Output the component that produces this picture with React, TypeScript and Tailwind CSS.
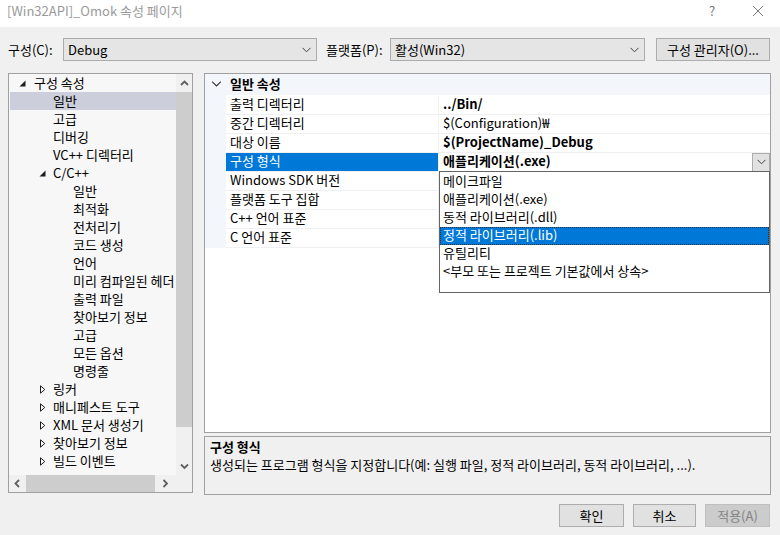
import React from "react";

const FONT = "font-['Noto_Sans_CJK_KR','Noto_Sans',sans-serif]";

type TreeItem = { label: string; level: number; state?: "open" | "closed"; selected?: boolean };

const treeItems: TreeItem[] = [
  { label: "구성 속성", level: 0, state: "open" },
  { label: "일반", level: 1, selected: true },
  { label: "고급", level: 1 },
  { label: "디버깅", level: 1 },
  { label: "VC++ 디렉터리", level: 1 },
  { label: "C/C++", level: 1, state: "open" },
  { label: "일반", level: 2 },
  { label: "최적화", level: 2 },
  { label: "전처리기", level: 2 },
  { label: "코드 생성", level: 2 },
  { label: "언어", level: 2 },
  { label: "미리 컴파일된 헤더", level: 2 },
  { label: "출력 파일", level: 2 },
  { label: "찾아보기 정보", level: 2 },
  { label: "고급", level: 2 },
  { label: "모든 옵션", level: 2 },
  { label: "명령줄", level: 2 },
  { label: "링커", level: 1, state: "closed" },
  { label: "매니페스트 도구", level: 1, state: "closed" },
  { label: "XML 문서 생성기", level: 1, state: "closed" },
  { label: "찾아보기 정보", level: 1, state: "closed" },
  { label: "빌드 이벤트", level: 1, state: "closed" },
];

const props = [
  { name: "출력 디렉터리", value: "../Bin/", bold: true },
  { name: "중간 디렉터리", value: "$(Configuration)₩", bold: false },
  { name: "대상 이름", value: "$(ProjectName)_Debug", bold: true },
  { name: "구성 형식", value: "애플리케이션(.exe)", bold: true, selected: true },
  { name: "Windows SDK 버전", value: "", bold: false },
  { name: "플랫폼 도구 집합", value: "", bold: false },
  { name: "C++ 언어 표준", value: "", bold: false },
  { name: "C 언어 표준", value: "", bold: false },
];

const options = [
  "메이크파일",
  "애플리케이션(.exe)",
  "동적 라이브러리(.dll)",
  "정적 라이브러리(.lib)",
  "유틸리티",
  "<부모 또는 프로젝트 기본값에서 상속>",
];

const ChevronDown = ({ className = "" }: { className?: string }) => (
  <svg width="9" height="6" viewBox="0 0 9 6" className={className}>
    <path d="M0.5 0.8 L4.5 4.8 L8.5 0.8" fill="none" stroke="currentColor" strokeWidth="1" />
  </svg>
);

const Arrow = ({ dir }: { dir: "up" | "down" | "left" | "right" }) => {
  const d = {
    up: "M1 6 L4.5 2.5 L8 6",
    down: "M1 2.5 L4.5 6 L8 2.5",
    left: "M6 1 L2.5 4.5 L6 8",
    right: "M2.5 1 L6 4.5 L2.5 8",
  }[dir];
  return (
    <svg width="9" height="9" viewBox="0 0 9 9">
      <path d={d} fill="none" stroke="#606060" strokeWidth="1.8" />
    </svg>
  );
};

const Toggle = ({ state }: { state: "open" | "closed" }) =>
  state === "open" ? (
    <svg width="7" height="7" viewBox="0 0 7 7">
      <path d="M6.5 0.5 L6.5 6.5 L0.5 6.5 Z" fill="#1e1e1e" />
    </svg>
  ) : (
    <svg width="7" height="9" viewBox="0 0 7 9">
      <path d="M1.5 0.8 L5.8 4.5 L1.5 8.2 Z" fill="none" stroke="#1e1e1e" strokeWidth="1" />
    </svg>
  );

const Select = ({ value, width }: { value: string; width: string }) => (
  <div className={`${width} h-[23px] border border-[#acacac] bg-[#e5e5e5] flex items-center justify-between pl-[4px] pr-[5px]`}>
    <span>{value}</span>
    <ChevronDown className="text-[#404040]" />
  </div>
);

export default function App() {
  return (
    <div className={`w-[780px] h-[535px] bg-[#f0f0f0] text-[13px] text-black leading-none ${FONT} overflow-hidden`}>
      {/* title bar */}
      <div className="h-[27px] bg-white flex items-center pl-[7px] pb-[6px] text-[#9a9a9a]">
        <span className="flex-1">[Win32API]_Omok 속성 페이지</span>
        <span className="w-[20px] text-center mr-[30px] text-[#777]">?</span>
        <svg width="12" height="12" viewBox="0 0 12 12" className="mr-[16px]">
          <path d="M1 1 L11 11 M11 1 L1 11" stroke="#777" strokeWidth="1" />
        </svg>
      </div>

      {/* config row */}
      <div className="flex items-center pt-[11px] pl-[8px] h-[34px]">
        <span className="w-[55px]">구성(C):</span>
        <Select value="Debug" width="w-[254px]" />
        <span className="ml-[9px] w-[64px]">플랫폼(P):</span>
        <Select value="활성(Win32)" width="w-[255px]" />
        <button className="ml-[11px] w-[114px] h-[23px] border border-[#adadad] bg-[#e1e1e1]">
          구성 관리자(O)...
        </button>
      </div>

      {/* main */}
      <div className="flex pl-[8px] pt-[12px] gap-[11px]">
        {/* tree */}
        <div className="w-[185px] h-[420px] border border-[#a0a0a0] bg-[#f7f7f7] flex flex-col">
          <div className="flex flex-1 min-h-0">
            <div className="flex-1 overflow-hidden">
              {treeItems.map((it, i) => {
                const pad = it.level === 0 ? 25 : it.level === 1 ? 44 : 64;
                return (
                  <div
                    key={i}
                    className={`relative h-[18px] flex items-center whitespace-nowrap ${it.selected ? "bg-[#cccedb] ml-[1px]" : ""}`}
                  >
                    {it.state && (
                      <span
                        className={`absolute flex items-center ${it.level === 0 ? "left-[10px]" : "left-[30px]"}`}
                      >
                        <Toggle state={it.state} />
                      </span>
                    )}
                    <span className="pb-[2px]" style={{ paddingLeft: it.selected ? pad - 1 : pad }}>
                      {it.label}
                    </span>
                  </div>
                );
              })}
            </div>
            <div className="w-[16px] flex flex-col items-center bg-[#f0f0f0]">
              <div className="h-[18px] flex items-center justify-center">
                <Arrow dir="up" />
              </div>
              <div className="w-full h-[335px] bg-[#cdcdcd]" />
              <div className="flex-1" />
              <div className="h-[18px] flex items-center justify-center">
                <Arrow dir="down" />
              </div>
            </div>
          </div>
          <div className="h-[17px] flex items-center bg-[#f0f0f0]">
            <div className="w-[17px] flex items-center justify-center">
              <Arrow dir="left" />
            </div>
            <div className="w-[129px] h-[17px] bg-[#cdcdcd]" />
            <div className="w-[20px] flex items-center justify-center">
              <Arrow dir="right" />
            </div>
          </div>
        </div>

        {/* right column */}
        <div className="w-[567px] flex flex-col">
          <div className="relative h-[360px] border border-[#a0a0a0] bg-white">
            <div className="h-[21px] bg-[#f3f6fb] flex items-center">
              <span className="w-[21px] flex justify-center pl-[2px] pb-[2px]">
                <ChevronDown className="text-[#333] scale-110" />
              </span>
              <span className="pl-[4px] pb-[3px] font-bold">일반 속성</span>
            </div>
            <div className="flex">
              <div className="w-[21px] bg-[#f3f6fb]" />
              <div className="flex-1 pt-[1px]">
                {props.map((p, i) => (
                  <div key={i} className="h-[19px] flex border-b border-[#f0f0f0]">
                    <div
                      className={`w-[213px] flex items-center pl-[4px] pb-[3px] border-r border-[#f0f0f0] ${p.selected ? "bg-[#0078d7] text-white" : ""}`}
                    >
                      {p.name}
                    </div>
                    <div className={`flex-1 flex items-center pl-[4px] ${p.bold ? "font-bold" : ""}`}>
                      <span className="flex-1 pb-[3px]">{p.value}</span>
                      {p.selected && (
                        <span className="w-[18px] h-[19px] border border-[#adadad] bg-[#e1e1e1] flex items-center justify-center">
                          <ChevronDown className="text-[#404040]" />
                        </span>
                      )}
                    </div>
                  </div>
                ))}
              </div>
            </div>

            {/* dropdown list */}
            <div className="absolute left-[234px] top-[97px] w-[331px] h-[122px] border border-[#646464] bg-white pt-[1px]">
              {options.map((o, i) => (
                <div
                  key={i}
                  className={`h-[18px] flex items-center pl-[3px] pb-[3px] whitespace-nowrap ${i === 3 ? "bg-[#0078d7] text-white outline-1 outline-dotted outline-[#333] -outline-offset-1" : ""}`}
                >
                  {o}
                </div>
              ))}
            </div>
          </div>

          <div className="mt-[3px] h-[59px] border border-[#a0a0a0] bg-[#f0f0f0] px-[5px] pt-[1px]">
            <div className="font-bold h-[18px] flex items-center pb-[2px]">구성 형식</div>
            <div className="h-[18px] flex items-center pb-[2px]">
              생성되는 프로그램 형식을 지정합니다(예: 실행 파일, 정적 라이브러리, 동적 라이브러리, ...).
            </div>
          </div>
        </div>
      </div>

      {/* buttons */}
      <div className="flex justify-end gap-[9px] pr-[10px] pt-[9px]">
        <button className="w-[65px] h-[23px] border border-[#adadad] bg-[#e1e1e1]">확인</button>
        <button className="w-[63px] h-[23px] border border-[#adadad] bg-[#e1e1e1]">취소</button>
        <button className="w-[65px] h-[23px] border border-[#bfbfbf] bg-[#cccccc] text-[#838383]">적용(A)</button>
      </div>
    </div>
  );
}
